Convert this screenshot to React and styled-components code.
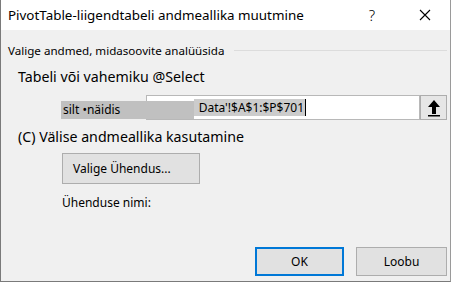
import React from "react";
import styled, { createGlobalStyle } from "styled-components";

const Global = createGlobalStyle`
  html, body { margin: 0; padding: 0; background: #ffffff; }
  * { box-sizing: border-box; }
`;

const Window = styled.div`
  width: 451px;
  height: 282px;
  display: flex;
  flex-direction: column;
  border-left: 1px solid #7a7a7a;
  border-right: 1px solid #9a9a9a;
  border-bottom: 1px solid #7a7a7a;
  font-family: "Noto Sans", "Liberation Sans", sans-serif;
  color: #000;
  overflow: hidden;
`;

const TitleBar = styled.div`
  height: 30px;
  flex: none;
  background: #ffffff;
  display: flex;
  align-items: center;
  padding-left: 7px;
`;

const Title = styled.div`
  flex: 1;
  font-size: 13.4px;
  white-space: nowrap;
`;

const TitleButton = styled.div`
  width: ${(p) => p.$w}px;
  height: 30px;
  display: flex;
  align-items: center;
  justify-content: center;
  font-size: 15px;
  font-weight: 300;
`;

const Body = styled.div`
  flex: 1;
  background: #f0f0f0;
  display: flex;
  flex-direction: column;
  padding: 12px 3px 5px 7px;
`;

const GroupHeader = styled.div`
  height: 16px;
  display: flex;
  align-items: center;
  font-size: 11.6px;
  white-space: nowrap;
`;

const GroupLine = styled.div`
  flex: 1;
  height: 1px;
  margin-left: 10px;
  background: #dcdcdc;
`;

const SectionLabel = styled.div`
  margin-top: ${(p) => p.$mt}px;
  margin-left: 10px;
  height: 18px;
  line-height: 18px;
  font-size: 14.2px;
  white-space: nowrap;
`;

const RangeRow = styled.div`
  margin-top: 9px;
  margin-left: 53px;
  display: flex;
  align-items: center;
  height: 25px;
`;

const RedactedLabel = styled.div`
  position: relative;
  z-index: 1;
  width: 133px;
  height: 18px;
  margin-top: 4px;
  margin-right: -48px;
  background: #c0c0c0;
  font-size: 12px;
  line-height: 18px;
  padding-left: 2px;
  white-space: nowrap;
`;

const TextBox = styled.div`
  width: 275px;
  height: 25px;
  background: #ffffff;
  border: 1px solid #b8b8b8;
  display: flex;
  align-items: center;
  padding-left: 47px;
`;

const Selection = styled.span`
  background: #cccccc;
  font-size: 12px;
  line-height: 17px;
  height: 17px;
  padding-left: 5px;
  padding-right: 1px;
  white-space: nowrap;
`;

const Caret = styled.span`
  width: 1px;
  height: 17px;
  background: #000;
`;

const ArrowButton = styled.div`
  width: 27px;
  height: 25px;
  background: #e6e6e6;
  border: 1px solid #adadad;
  display: flex;
  align-items: center;
  justify-content: center;
`;

const Button = styled.div`
  width: ${(p) => p.$w}px;
  height: ${(p) => p.$h}px;
  background: #e1e1e1;
  border: 1px solid ${(p) => (p.$default ? "#0078d7" : "#adadad")};
  box-shadow: ${(p) => (p.$default ? "inset 0 0 0 1px #0078d7" : "none")};
  display: flex;
  align-items: center;
  justify-content: ${(p) => (p.$left ? "flex-start" : "center")};
  padding-left: ${(p) => (p.$left ? 10 : 0)}px;
  font-size: 12px;
  white-space: nowrap;
`;

const Indented = styled.div`
  margin-left: 54px;
  margin-top: ${(p) => p.$mt}px;
`;

const SmallText = styled.div`
  height: 16px;
  line-height: 16px;
  font-size: 12px;
`;

const Footer = styled.div`
  margin-top: auto;
  display: flex;
  justify-content: flex-end;
  gap: 12px;
`;

const UpArrow = () => (
  <svg width="14" height="18" viewBox="0 0 14 18">
    <polygon points="7,1 1,8 5,8 5,15 9,15 9,8 13,8" fill="#000" />
    <rect x="1" y="16" width="12" height="1.5" fill="#000" />
  </svg>
);

const CloseIcon = () => (
  <svg width="12" height="12" viewBox="0 0 12 12">
    <path d="M1 1 L11 11 M11 1 L1 11" stroke="#000" strokeWidth="1.1" fill="none" />
  </svg>
);

export default function App() {
  return (
    <>
      <Global />
      <Window>
        <TitleBar>
          <Title>PivotTable-liigendtabeli andmeallika muutmine</Title>
          <TitleButton $w={56}>?</TitleButton>
          <TitleButton $w={50}>
            <CloseIcon />
          </TitleButton>
        </TitleBar>
        <Body>
          <GroupHeader>
            Valige andmed, midasoovite analüüsida
            <GroupLine />
          </GroupHeader>
          <SectionLabel $mt={10}>Tabeli või vahemiku @Select</SectionLabel>
          <RangeRow>
            <RedactedLabel>silt •näidis</RedactedLabel>
            <TextBox>
              <Selection>Data'!$A$1:$P$701</Selection>
              <Caret />
            </TextBox>
            <ArrowButton>
              <UpArrow />
            </ArrowButton>
          </RangeRow>
          <SectionLabel $mt={8}>(C) Välise andmeallika kasutamine</SectionLabel>
          <Indented $mt={7}>
            <Button $w={138} $h={31} $left>
              Valige Ühendus...
            </Button>
          </Indented>
          <Indented $mt={11}>
            <SmallText>Ühenduse nimi:</SmallText>
          </Indented>
          <Footer>
            <Button $w={89} $h={29} $default>
              OK
            </Button>
            <Button $w={91} $h={29}>
              Loobu
            </Button>
          </Footer>
        </Body>
      </Window>
    </>
  );
}
